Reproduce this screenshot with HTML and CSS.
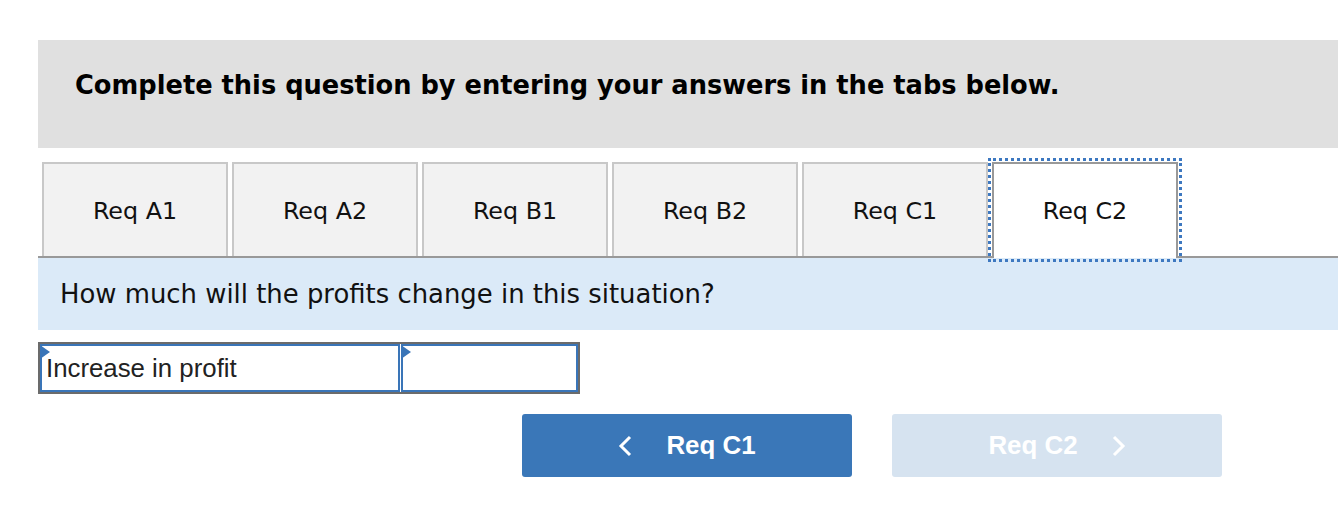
FILE: index.html
```html
<!DOCTYPE html>
<html>
<head>
<meta charset="utf-8">
<link rel="stylesheet" href="styles.css">
</head>
<body>
<div class="page">
  <div class="header">Complete this question by entering your answers in the tabs below.</div>
  <div class="tabs">
    <div class="tab">Req A1</div>
    <div class="tab">Req A2</div>
    <div class="tab">Req B1</div>
    <div class="tab">Req B2</div>
    <div class="tab">Req C1</div>
    <div class="tab tab-active">Req C2</div>
  </div>
  <div class="panel">How much will the profits change in this situation?</div>
  <div class="answer">
    <div class="cell cell-label"><span class="mark"></span>Increase in profit</div>
    <div class="cell cell-value"><span class="mark"></span></div>
  </div>
  <div class="nav">
    <div class="btn btn-prev">
      <svg class="chev" width="14" height="22" viewBox="0 0 14 22"><path d="M12 2 L3 11 L12 20" fill="none" stroke="#fff" stroke-width="3"/></svg>
      <span class="btn-label">Req C1</span>
    </div>
    <div class="btn btn-next">
      <span class="btn-label">Req C2</span>
      <svg class="chev" width="14" height="22" viewBox="0 0 14 22"><path d="M2 2 L11 11 L2 20" fill="none" stroke="#fff" stroke-width="3"/></svg>
    </div>
  </div>
</div>
</body>
</html>
```
FILE: styles.css
```css
html, body {
  margin: 0;
  padding: 0;
  background: #fff;
}
.page {
  padding: 40px 0 0 38px;
  font-family: "DejaVu Sans", Verdana, sans-serif;
  color: #000;
}
.header {
  height: 108px;
  background: #e0e0e0;
  padding: 0 0 18px 37px;
  display: flex;
  align-items: center;
  font-weight: bold;
  font-size: 25.7px;
  box-sizing: border-box;
}
.tabs {
  margin-top: 14px;
  padding-left: 4px;
  display: flex;
  gap: 4px;
  border-bottom: 2px solid #999;
}
.tab {
  width: 186px;
  height: 94px;
  box-sizing: border-box;
  border: 2px solid #c8c8c8;
  border-bottom: none;
  background: #f2f2f2;
  display: flex;
  align-items: center;
  justify-content: center;
  padding-top: 2px;
  font-size: 23.8px;
  color: #111;
}
.tab-active {
  background: #fff;
  border-color: #999;
  height: 96px;
  margin-bottom: -2px;
  padding-bottom: 2px;
  outline: 3px dotted #3d78c0;
  outline-offset: 1px;
}
.panel {
  height: 72px;
  background: #dbeaf8;
  padding-left: 22px;
  display: flex;
  align-items: center;
  font-size: 25.9px;
  color: #111;
}
.answer {
  margin-top: 12px;
  display: inline-flex;
  border: 2px solid #6b6b6b;
  height: 52px;
  box-sizing: border-box;
}
.cell {
  position: relative;
  border: 2px solid #3a75b8;
  box-sizing: border-box;
  height: 100%;
  display: flex;
  align-items: center;
  font-family: "Liberation Sans", Arial, sans-serif;
  font-size: 25.8px;
  color: #222;
}
.cell-label {
  width: 360px;
  padding-left: 4px;
}
.cell-value {
  width: 177px;
  margin-left: 1px;
}
.mark {
  position: absolute;
  left: -2px;
  top: -1px;
  width: 0;
  height: 0;
  border-top: 7px solid transparent;
  border-bottom: 7px solid transparent;
  border-left: 10px solid #3a75b8;
}
.nav {
  margin-top: 20px;
  padding-left: 484px;
  display: flex;
  gap: 40px;
}
.btn {
  width: 330px;
  height: 63px;
  border-radius: 3px;
  display: flex;
  align-items: center;
  justify-content: center;
  gap: 34px;
  font-family: "Liberation Sans", Arial, sans-serif;
  font-weight: bold;
  font-size: 25.9px;
  color: #fff;
}
.btn-prev {
  background: #3a77b8;
}
.btn-next {
  background: #d6e3f0;
}
.chev {
  display: block;
}
```
